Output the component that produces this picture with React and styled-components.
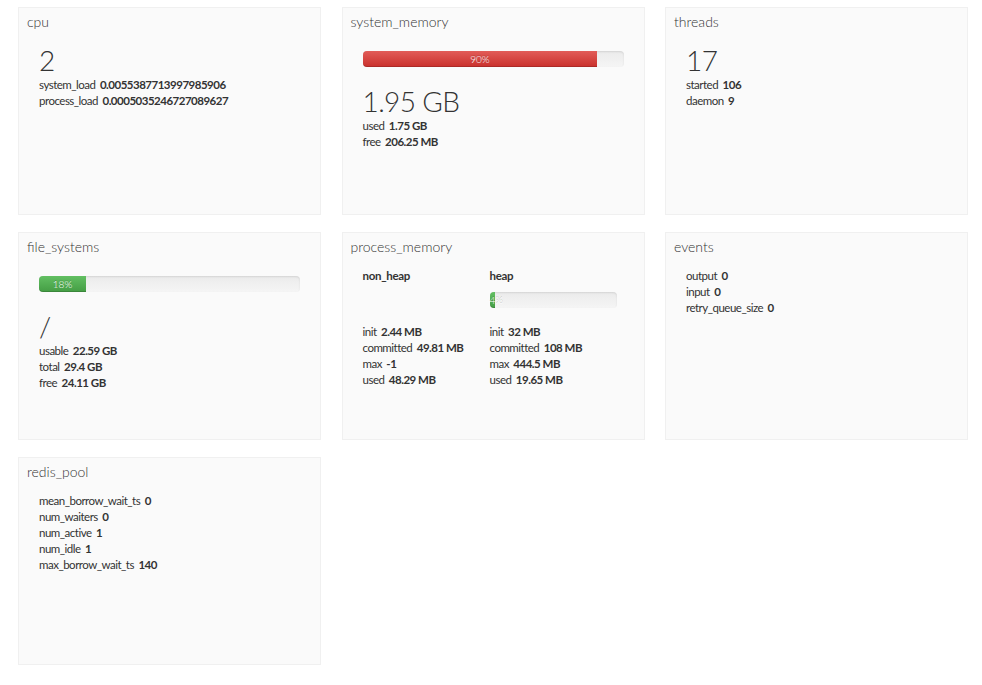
import React from "react";
import styled, { createGlobalStyle } from "styled-components";

const GlobalStyle = createGlobalStyle`
  body {
    margin: 0;
    background: #ffffff;
    color: #333333;
    font-family: Lato, "Open Sans", sans-serif;
    font-size: 12px;
  }
`;

const Grid = styled.div`
  display: grid;
  grid-template-columns: repeat(3, 303px);
  grid-auto-rows: 208px;
  column-gap: 20.5px;
  row-gap: 17px;
  padding: 7px 0 0 18px;
`;

const Card = styled.div`
  box-sizing: border-box;
  background: #fafafa;
  border: 1px solid #f0f0f0;
  padding: 4px 8px;
`;

const Title = styled.div`
  font-size: 14px;
  font-weight: 300;
  line-height: 20px;
  color: #333;
`;

const Body = styled.div`
  display: flow-root;
  padding: 0 12px;
  margin-top: 11px;
`;

const BigValue = styled.div`
  font-size: 28px;
  font-weight: 300;
  line-height: 34px;
  letter-spacing: -0.6px;
  color: #333;
`;

const Row = styled.div`
  font-size: 11.5px;
  line-height: 16px;
  letter-spacing: -0.5px;
  white-space: nowrap;

  b {
    font-weight: 700;
    margin-left: 2px;
  }
`;

const Track = styled.div`
  height: 16px;
  margin: 8px 0 ${(p) => p.$after || 17}px;
  border-radius: 4px;
  background: linear-gradient(to bottom, #ebebeb 0, #f5f5f5 100%);
  box-shadow: inset 0 1px 2px rgba(0, 0, 0, 0.1);
  visibility: ${(p) => (p.$hidden ? "hidden" : "visible")};
`;

const Fill = styled.div`
  height: 100%;
  border-radius: 4px 0 0 4px;
  background: ${(p) =>
    p.$tone === "danger"
      ? "linear-gradient(to bottom, #e25c58 0, #c9302c 100%)"
      : "linear-gradient(to bottom, #62bf62 0, #449d44 100%)"};
  box-shadow: inset 0 -1px 0 rgba(0, 0, 0, 0.15);
  color: #fff;
  font-size: 10px;
  font-weight: 300;
  line-height: 16px;
  text-align: center;
  white-space: nowrap;
  text-shadow: 0 -1px 0 rgba(0, 0, 0, 0.25);
`;

const Columns = styled.div`
  display: grid;
  grid-template-columns: 127px 127px;
`;

const ColumnHead = styled.div`
  font-size: 11.5px;
  line-height: 16px;
  letter-spacing: -0.3px;
  font-weight: 700;
`;

const Progress = ({ pct, tone, after, hidden }) => (
  <Track $after={after} $hidden={hidden}>
    <Fill $tone={tone} style={{ width: `${pct}%` }}>
      {pct}%
    </Fill>
  </Track>
);

const Stats = ({ items }) =>
  items.map(([k, v]) => (
    <Row key={k}>
      {k} <b>{v}</b>
    </Row>
  ));

export default function App() {
  return (
    <>
      <GlobalStyle />
      <Grid>
        <Card>
          <Title>cpu</Title>
          <Body>
            <BigValue>2</BigValue>
            <Stats
              items={[
                ["system_load", "0.0055387713997985906"],
                ["process_load", "0.0005035246727089627"],
              ]}
            />
          </Body>
        </Card>

        <Card>
          <Title>system_memory</Title>
          <Body>
            <Progress pct={90} tone="danger" />
            <BigValue>1.95 GB</BigValue>
            <Stats
              items={[
                ["used", "1.75 GB"],
                ["free", "206.25 MB"],
              ]}
            />
          </Body>
        </Card>

        <Card>
          <Title>threads</Title>
          <Body>
            <BigValue>17</BigValue>
            <Stats
              items={[
                ["started", "106"],
                ["daemon", "9"],
              ]}
            />
          </Body>
        </Card>

        <Card>
          <Title>file_systems</Title>
          <Body>
            <Progress pct={18} tone="success" />
            <BigValue>/</BigValue>
            <Stats
              items={[
                ["usable", "22.59 GB"],
                ["total", "29.4 GB"],
                ["free", "24.11 GB"],
              ]}
            />
          </Body>
        </Card>

        <Card>
          <Title>process_memory</Title>
          <Body>
            <Columns>
              <div>
                <ColumnHead>non_heap</ColumnHead>
                <Progress pct={0} tone="success" after={16} hidden />
                <Stats
                  items={[
                    ["init", "2.44 MB"],
                    ["committed", "49.81 MB"],
                    ["max", "-1"],
                    ["used", "48.29 MB"],
                  ]}
                />
              </div>
              <div>
                <ColumnHead>heap</ColumnHead>
                <Progress pct={4} tone="success" after={16} />
                <Stats
                  items={[
                    ["init", "32 MB"],
                    ["committed", "108 MB"],
                    ["max", "444.5 MB"],
                    ["used", "19.65 MB"],
                  ]}
                />
              </div>
            </Columns>
          </Body>
        </Card>

        <Card>
          <Title>events</Title>
          <Body>
            <Stats
              items={[
                ["output", "0"],
                ["input", "0"],
                ["retry_queue_size", "0"],
              ]}
            />
          </Body>
        </Card>

        <Card>
          <Title>redis_pool</Title>
          <Body>
            <Stats
              items={[
                ["mean_borrow_wait_ts", "0"],
                ["num_waiters", "0"],
                ["num_active", "1"],
                ["num_idle", "1"],
                ["max_borrow_wait_ts", "140"],
              ]}
            />
          </Body>
        </Card>
      </Grid>
    </>
  );
}
